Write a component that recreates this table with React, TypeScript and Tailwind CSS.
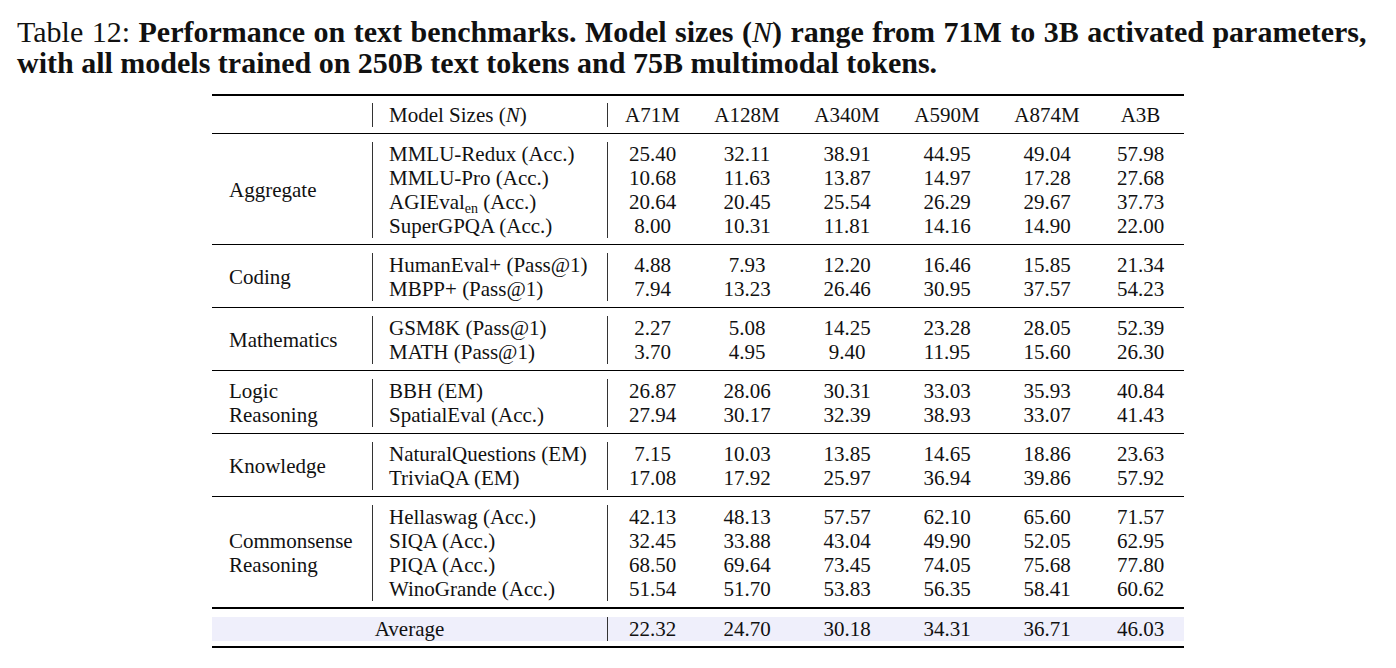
const groups = [
  {
    name: ["Aggregate"],
    rows: [
      { metric: "MMLU-Redux (Acc.)", v: ["25.40", "32.11", "38.91", "44.95", "49.04", "57.98"] },
      { metric: "MMLU-Pro (Acc.)", v: ["10.68", "11.63", "13.87", "14.97", "17.28", "27.68"] },
      { metric: "AGIEVAL", v: ["20.64", "20.45", "25.54", "26.29", "29.67", "37.73"] },
      { metric: "SuperGPQA (Acc.)", v: ["8.00", "10.31", "11.81", "14.16", "14.90", "22.00"] },
    ],
  },
  {
    name: ["Coding"],
    rows: [
      { metric: "HumanEval+ (Pass@1)", v: ["4.88", "7.93", "12.20", "16.46", "15.85", "21.34"] },
      { metric: "MBPP+ (Pass@1)", v: ["7.94", "13.23", "26.46", "30.95", "37.57", "54.23"] },
    ],
  },
  {
    name: ["Mathematics"],
    rows: [
      { metric: "GSM8K (Pass@1)", v: ["2.27", "5.08", "14.25", "23.28", "28.05", "52.39"] },
      { metric: "MATH (Pass@1)", v: ["3.70", "4.95", "9.40", "11.95", "15.60", "26.30"] },
    ],
  },
  {
    name: ["Logic", "Reasoning"],
    rows: [
      { metric: "BBH (EM)", v: ["26.87", "28.06", "30.31", "33.03", "35.93", "40.84"] },
      { metric: "SpatialEval (Acc.)", v: ["27.94", "30.17", "32.39", "38.93", "33.07", "41.43"] },
    ],
  },
  {
    name: ["Knowledge"],
    rows: [
      { metric: "NaturalQuestions (EM)", v: ["7.15", "10.03", "13.85", "14.65", "18.86", "23.63"] },
      { metric: "TriviaQA (EM)", v: ["17.08", "17.92", "25.97", "36.94", "39.86", "57.92"] },
    ],
  },
  {
    name: ["Commonsense", "Reasoning"],
    rows: [
      { metric: "Hellaswag (Acc.)", v: ["42.13", "48.13", "57.57", "62.10", "65.60", "71.57"] },
      { metric: "SIQA (Acc.)", v: ["32.45", "33.88", "43.04", "49.90", "52.05", "62.95"] },
      { metric: "PIQA (Acc.)", v: ["68.50", "69.64", "73.45", "74.05", "75.68", "77.80"] },
      { metric: "WinoGrande (Acc.)", v: ["51.54", "51.70", "53.83", "56.35", "58.41", "60.62"] },
    ],
  },
];

const sizes = ["A71M", "A128M", "A340M", "A590M", "A874M", "A3B"];
const average = ["22.32", "24.70", "30.18", "34.31", "36.71", "46.03"];

const cols = "grid grid-cols-[160px_235px_90px_100px_100px_100px_100px_87px]";

function Metric({ label }: { label: string }) {
  if (label === "AGIEVAL") {
    return (
      <span>
        AGIEval<span className="relative top-[4px] text-[14px] leading-none">en</span> (Acc.)
      </span>
    );
  }
  return <span>{label}</span>;
}

export default function App() {
  return (
    <div className="w-[1396px] h-[668px] bg-white text-[#111] font-[family-name:Liberation_Serif,Times_New_Roman,serif] overflow-hidden">
      <p className="pl-[17px] pt-[16px] text-[30px] leading-[31px] whitespace-nowrap">
        <span className="[word-spacing:1px]">
          Table 12:{" "}
          <b>
            Performance on text benchmarks. Model sizes (<i className="font-normal">N</i>) range from 71M to 3B activated parameters,
          </b>
        </span>
        <br />
        <b>with all models trained on 250B text tokens and 75B multimodal tokens.</b>
      </p>

      <div className="w-[972px] mx-auto mt-[16px] text-[21px] leading-[24px]">
        {/* header */}
        <div className="border-t-2 border-b border-black pt-[7px] pb-[6px]">
          <div className={cols}>
            <div />
            <div className="border-l border-[#333] pl-[16px]">
              Model Sizes (<i>N</i>)
            </div>
            {sizes.map((s, i) => (
              <div key={s} className={i === 0 ? "border-l border-[#333] text-center" : "text-center"}>
                {s}
              </div>
            ))}
          </div>
        </div>

        {groups.map((g) => (
          <div key={g.name.join(" ")} className="border-b border-black pt-[8px] pb-[6px]">
            <div className={cols}>
              <div
                className="pl-[17px] flex flex-col justify-center"
                style={{ gridRow: `span ${g.rows.length}` }}
              >
                {g.name.map((n) => (
                  <span key={n}>{n}</span>
                ))}
              </div>
              {g.rows.map((r) => (
                <div key={r.metric} className="contents">
                  <div className="border-l border-[#333] pl-[16px] whitespace-nowrap">
                    <Metric label={r.metric} />
                  </div>
                  {r.v.map((v, i) => (
                    <div key={i} className={i === 0 ? "border-l border-[#333] text-center" : "text-center"}>
                      {v}
                    </div>
                  ))}
                </div>
              ))}
            </div>
          </div>
        ))}

        {/* average */}
        <div className="border-t border-black border-b-2 pt-[8px] pb-[5px]">
          <div className={`${cols} bg-[#efeffb]`}>
            <div className="col-span-2 text-center">Average</div>
            {average.map((v, i) => (
              <div key={i} className={i === 0 ? "border-l border-[#333] text-center" : "text-center"}>
                {v}
              </div>
            ))}
          </div>
        </div>
      </div>
    </div>
  );
}
